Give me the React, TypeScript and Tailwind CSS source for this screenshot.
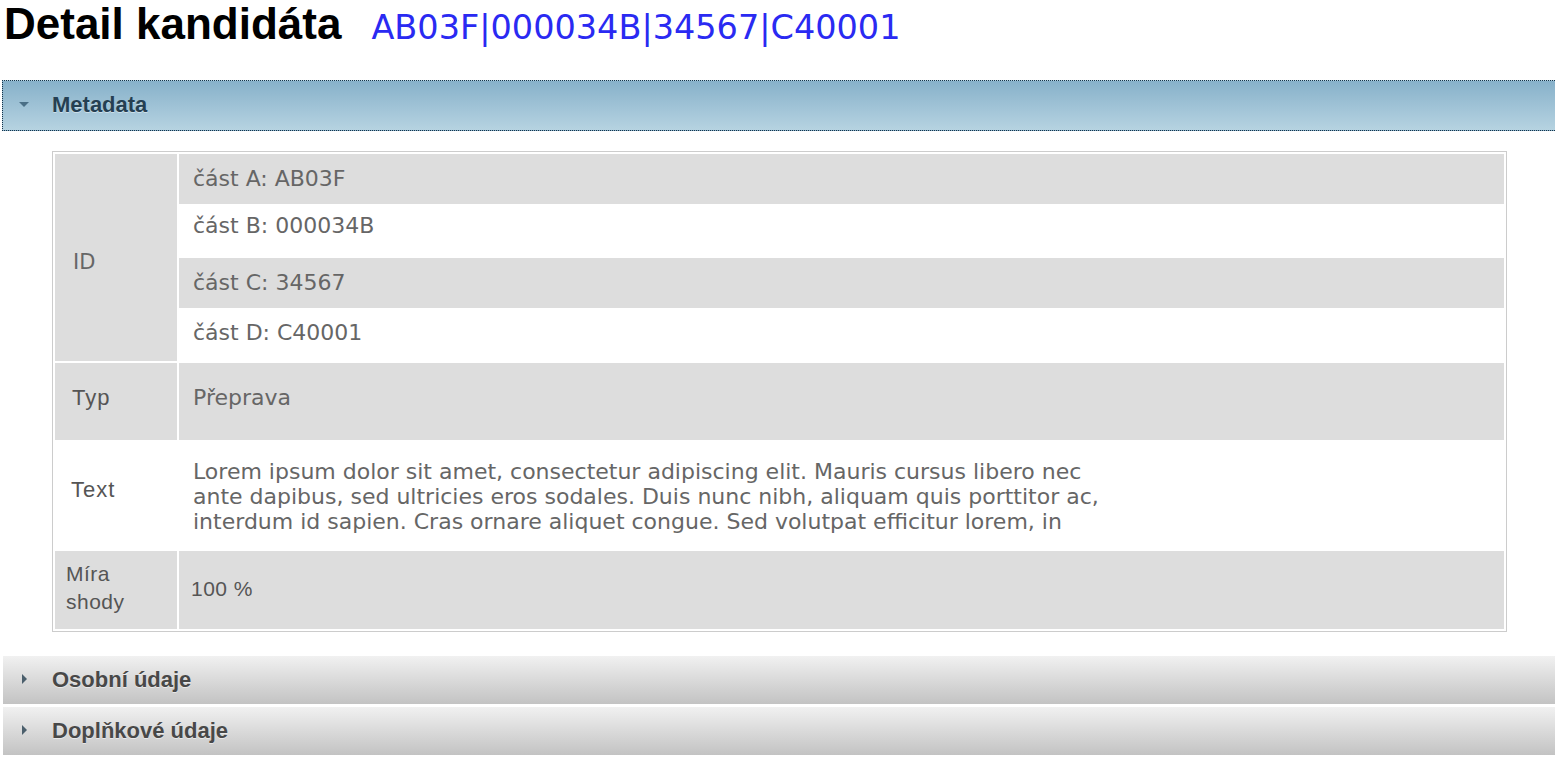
import React from "react";

const verdana = "font-['DejaVu_Sans',Verdana,sans-serif]";
const arial = "font-['Liberation_Sans',Arial,sans-serif]";

function SectionHeader({
  title,
  open,
}: {
  title: string;
  open?: boolean;
}) {
  if (open) {
    return (
      <div className="ml-[2px] flex h-[51px] items-center border-y border-l border-dotted border-[#15334a] bg-gradient-to-b from-[#87b1ca] to-[#b6d3e1] pb-[3px]">
        <span className="ml-[16px] h-0 w-0 border-x-[5px] border-t-[5px] border-x-transparent border-t-[#4a6f86]" />
        <span
          className={`ml-[23px] text-[22px] font-bold text-[#253f52] ${arial} [text-shadow:0_1px_0_rgba(255,255,255,0.45)]`}
        >
          {title}
        </span>
      </div>
    );
  }
  return (
    <div className="ml-[3px] flex h-[48px] items-center bg-gradient-to-b from-[#f1f1f1] to-[#c3c3c3] pb-[2px]">
      <span className="ml-[19px] h-0 w-0 border-y-[5px] border-l-[5px] border-y-transparent border-l-[#4b5f6c]" />
      <span
        className={`ml-[25px] text-[22px] font-bold text-[#484848] ${arial} [text-shadow:0_1px_0_rgba(255,255,255,0.5)]`}
      >
        {title}
      </span>
    </div>
  );
}

const idParts = [
  { label: "část A: AB03F", h: "h-[50px] pt-[12px] bg-[#dddddd]" },
  { label: "část B: 000034B", h: "h-[54px] pt-[9px] bg-white" },
  { label: "část C: 34567", h: "h-[50px] pt-[12px] bg-[#dddddd]" },
  { label: "část D: C40001", h: "h-[53px] pt-[12px] bg-white" },
];

const lorem = [
  "Lorem ipsum dolor sit amet, consectetur adipiscing elit. Mauris cursus libero nec",
  "ante dapibus, sed ultricies eros sodales. Duis nunc nibh, aliquam quis porttitor ac,",
  "interdum id sapien. Cras ornare aliquet congue. Sed volutpat efficitur lorem, in",
];

export default function App() {
  return (
    <div className="min-h-screen w-[1555px] bg-white">
      <div className="flex h-[80px] items-baseline pl-[4px]">
        <h1 className={`text-[44px] font-bold leading-[48px] text-black ${arial}`}>
          Detail kandidáta
        </h1>
        <span className={`ml-[30px] text-[33.5px] text-[#2a2af2] ${verdana}`}>
          AB03F|000034B|34567|C40001
        </span>
      </div>

      <SectionHeader title="Metadata" open />

      <div className="ml-[52px] mt-[20px] w-[1455px] border border-[#cccccc] p-[2px]">
        <div className="grid grid-cols-[122px_1fr] gap-[2px]">
          <div className={`flex h-[207px] items-center bg-[#dddddd] pl-[18px] pt-[10px] text-[21px] text-[#666] ${verdana}`}>
            ID
          </div>
          <div className="flex flex-col bg-white">
            {idParts.map((p) => (
              <div
                key={p.label}
                className={`${p.h} pl-[14px] text-[22px] leading-[26px] text-[#666] ${verdana}`}
              >
                {p.label}
              </div>
            ))}
          </div>

          <div className={`flex h-[77px] items-center bg-[#dddddd] pb-[9px] pl-[17px] text-[22px] tracking-[1px] text-[#555] ${arial}`}>
            Typ
          </div>
          <div className={`flex h-[77px] items-center bg-[#dddddd] pb-[8px] pl-[14px] text-[22px] text-[#666] ${verdana}`}>
            Přeprava
          </div>

          <div className={`flex h-[107px] items-center bg-white pb-[12px] pl-[16px] text-[22px] tracking-[1px] text-[#555] ${arial}`}>
            Text
          </div>
          <div className={`flex h-[107px] items-center bg-white pt-[2px] pl-[14px] text-[22px] leading-[25px] text-[#666] ${verdana}`}>
            <p>
              {lorem.map((line, i) => (
                <React.Fragment key={i}>
                  {line}
                  {i < lorem.length - 1 && <br />}
                </React.Fragment>
              ))}
            </p>
          </div>

          <div className={`flex h-[78px] items-center bg-[#dddddd] pb-[5px] pl-[11px] text-[21px] leading-[28px] tracking-[0.5px] text-[#555] ${arial}`}>
            <span>
              Míra
              <br />
              shody
            </span>
          </div>
          <div className={`flex h-[78px] items-center bg-[#dddddd] pb-[2px] pl-[12px] text-[21px] tracking-[0.5px] text-[#555] ${arial}`}>
            100 %
          </div>
        </div>
      </div>

      <div className="mt-[24px] flex flex-col gap-[3px]">
        <SectionHeader title="Osobní údaje" />
        <SectionHeader title="Doplňkové údaje" />
      </div>
    </div>
  );
}
